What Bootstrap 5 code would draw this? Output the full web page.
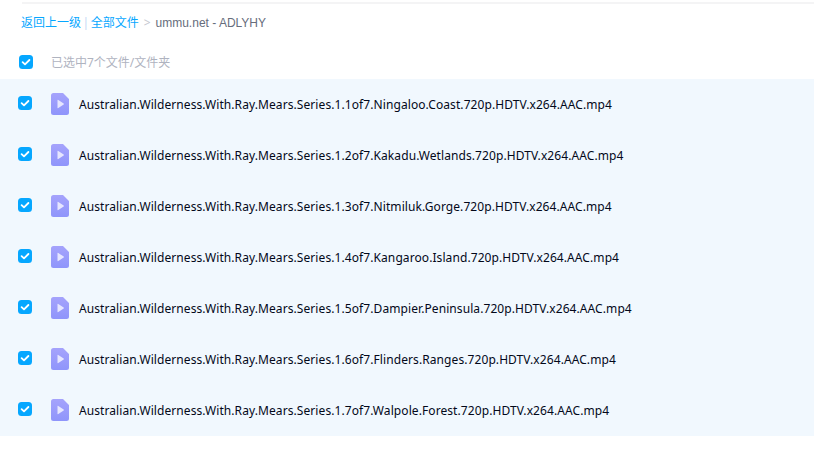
<!DOCTYPE html>
<html lang="en">
<head>
  <meta charset="UTF-8">
  <title>全部文件</title>
  <meta name="viewport" content="width=device-width, initial-scale=1">
  <link href="https://cdn.jsdelivr.net/npm/bootstrap@5.3.3/dist/css/bootstrap.min.css" rel="stylesheet">
  <style>
    body {
      background: #fff;
      font-family: "Noto Sans", "Noto Sans CJK SC", sans-serif;
      font-size: 12px;
      color: #03081a;
    }
    .top-rule {
      height: 2px;
      margin: 2px 0 0 22px;
      background: #f4f4f5;
    }
    .crumbs {
      height: 37px;
      padding: 10px 0 0 21px;
      line-height: 18px;
      color: #818999;
    }
    .crumbs a {
      color: #06a7ff;
      text-decoration: none;
    }
    .crumbs .divider { color: #c4d8f4; margin: 0 1.5px; }
    .crumbs .chevron { color: #c4c8d0; margin: 0 5px; }
    .crumbs .current { color: #666d7c; font-family: "Liberation Sans", sans-serif; }
    .select-bar {
      height: 38px;
      padding: 4px 0 0 19px;
      color: #afb3bf;
    }
    .select-text { padding-top: 2px; }
    .tick {
      width: 14px;
      height: 14px;
      flex: none;
    }
    .select-bar .tick { margin-right: 18px; }
    .file-row {
      height: 51px;
      padding-left: 18px;
      background: #f1f8fe;
    }
    .file-row .tick { margin: 0 19px 3px 0; }
    .file-icon {
      width: 18px;
      height: 22px;
      flex: none;
      margin: 0 10px 1px 0;
    }
    .file-name { letter-spacing: .085px; }
  </style>
</head>
<body>
  <div class="top-rule"></div>
  <div class="crumbs">
    <a href="#">返回上一级</a><span class="divider">|</span><a href="#">全部文件</a><span class="chevron">&gt;</span><span class="current">ummu.net - ADLYHY</span>
  </div>
  <div class="select-bar d-flex align-items-center">
    <svg class="tick" viewBox="0 0 14 14"><rect width="14" height="14" rx="3.500" fill="#06a7ff"/><path d="M3.600 7.100l2.400 2.300 4.400-4.400" fill="none" stroke="#fff" stroke-width="1.800" stroke-linecap="round" stroke-linejoin="round"/></svg>
    <span class="select-text">已选中7个文件/文件夹</span>
  </div>
  <div id="file-list"></div>

  <svg width="0" height="0" class="d-block">
    <defs>
      <linearGradient id="iconFill" x1="0" y1="0" x2="0" y2="1">
        <stop offset="0" stop-color="#a5a3fc"/>
        <stop offset="1" stop-color="#8f95fb"/>
      </linearGradient>
    </defs>
  </svg>

  <script src="https://cdn.jsdelivr.net/npm/bootstrap@5.3.3/dist/js/bootstrap.bundle.min.js"></script>
  <script>
    const files = [
      '1.1of7.Ningaloo.Coast',
      '1.2of7.Kakadu.Wetlands',
      '1.3of7.Nitmiluk.Gorge',
      '1.4of7.Kangaroo.Island',
      '1.5of7.Dampier.Peninsula',
      '1.6of7.Flinders.Ranges',
      '1.7of7.Walpole.Forest'
    ];
    const list = document.getElementById('file-list');
    files.forEach(f => {
      const row = document.createElement('div');
      row.className = 'file-row d-flex align-items-center';
      row.innerHTML = `
        <svg class="tick" viewBox="0 0 14 14"><rect width="14" height="14" rx="3.500" fill="#06a7ff"/><path d="M3.600 7.100l2.400 2.300 4.400-4.400" fill="none" stroke="#fff" stroke-width="1.800" stroke-linecap="round" stroke-linejoin="round"/></svg>
        <svg class="file-icon" viewBox="0 0 18 22"><path d="M2.500 0H12l6 6v13.500a2.500 2.500 0 0 1-2.500 2.500h-13A2.500 2.500 0 0 1 0 19.500v-17A2.500 2.500 0 0 1 2.500 0z" fill="url(#iconFill)"/><path d="M6.500 7.300v7.400a.5.5 0 0 0 .8.400l5.400-3.700a.5.5 0 0 0 0-.8L7.300 6.900a.5.5 0 0 0-.8.400z" fill="#e6e6ff"/></svg>
        <span class="file-name">Australian.Wilderness.With.Ray.Mears.Series.${f}.720p.HDTV.x264.AAC.mp4</span>`;
      list.appendChild(row);
    });
  </script>
</body>
</html>
